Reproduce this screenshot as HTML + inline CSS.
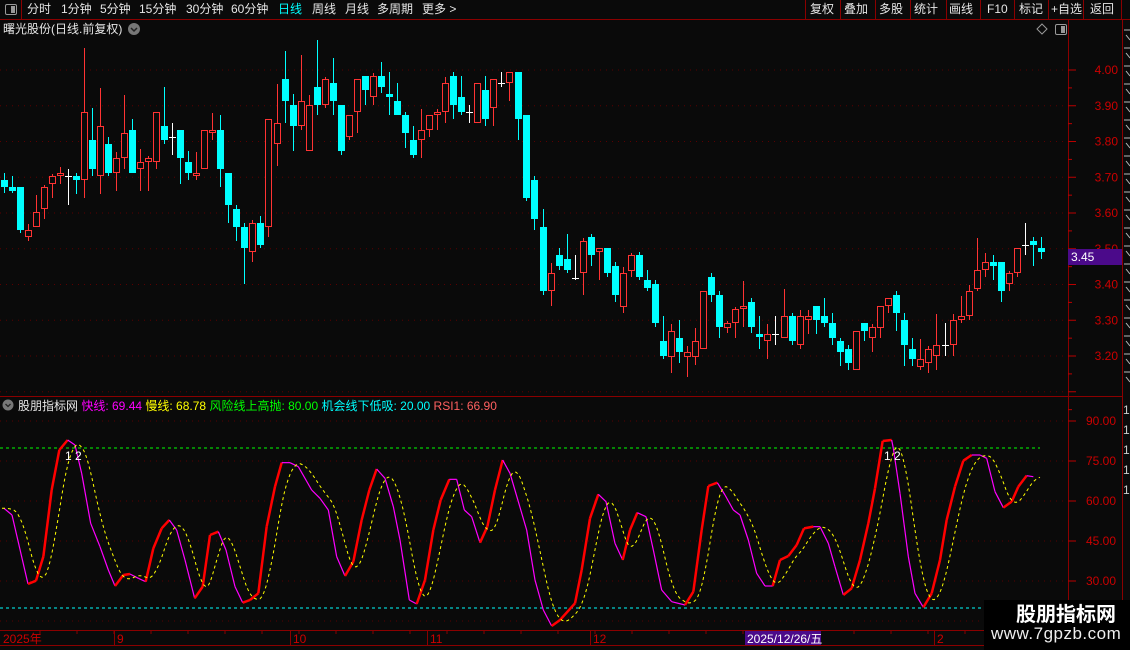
<!DOCTYPE html>
<html><head><meta charset="utf-8"><style>
*{margin:0;padding:0;box-sizing:border-box}
body{width:1130px;height:650px;background:#0a0a0a;overflow:hidden;position:relative;font-family:"Liberation Sans","Noto Sans CJK SC",sans-serif;color:#ddd}
.t{position:absolute;white-space:nowrap;font-size:12px;line-height:14px;color:#e6e6e6}
</style></head><body>
<svg id="s" width="1130" height="650" style="position:absolute;left:0;top:0"></svg>
<div class="t" style="left:27px;top:2px">分时</div>
<div class="t" style="left:61px;top:2px">1分钟</div>
<div class="t" style="left:100px;top:2px">5分钟</div>
<div class="t" style="left:139px;top:2px">15分钟</div>
<div class="t" style="left:186px;top:2px">30分钟</div>
<div class="t" style="left:231px;top:2px">60分钟</div>
<div class="t" style="left:278px;top:2px;color:#0ff">日线</div>
<div class="t" style="left:312px;top:2px">周线</div>
<div class="t" style="left:345px;top:2px">月线</div>
<div class="t" style="left:377px;top:2px">多周期</div>
<div class="t" style="left:422px;top:2px">更多 &gt;</div>
<div class="t" style="left:810px;top:2px">复权</div>
<div class="t" style="left:844px;top:2px">叠加</div>
<div class="t" style="left:879px;top:2px">多股</div>
<div class="t" style="left:914px;top:2px">统计</div>
<div class="t" style="left:949px;top:2px">画线</div>
<div class="t" style="left:987px;top:2px">F10</div>
<div class="t" style="left:1019px;top:2px">标记</div>
<div class="t" style="left:1051px;top:2px">+自选</div>
<div class="t" style="left:1090px;top:2px">返回</div>
<div class="t" style="left:3px;top:22px">曙光股份(日线.前复权)</div>
<div class="t" style="left:18px;top:399px">股朋指标网 <span style="color:#f0f">快线: 69.44</span> <span style="color:#ff0">慢线: 68.78</span> <span style="color:#0f0">风险线上高抛: 80.00</span> <span style="color:#0ff">机会线下低吸: 20.00</span> <span style="color:#ff6060">RSI1: 66.90</span></div>
<div style="position:absolute;left:984px;top:600px;width:146px;height:50px;background:#000"></div>
<div class="t" style="left:1016px;top:603px;font-size:20px;line-height:24px;font-weight:bold;color:#fff">股朋指标网</div>
<div class="t" style="left:991px;top:624px;font-size:17px;line-height:20px;color:#eee;letter-spacing:0.5px">www.7gpzb.com</div>
<script>
const S=document.getElementById('s');let h='';
const R='#8b0000';
h+=`<line x1="0" y1="19.5" x2="1130" y2="19.5" stroke="${R}"/><line x1="21.5" y1="0" x2="21.5" y2="19" stroke="${R}"/>`;
h+=`<rect x="5.5" y="4.5" width="11" height="10" rx="1.5" fill="none" stroke="#999"/><rect x="11" y="6" width="4" height="7" fill="#999"/>`;
[805,840,875,910,946,980,1014,1048,1083,1121].forEach(x=>h+=`<line x1="${x+.5}" y1="0" x2="${x+.5}" y2="19" stroke="${R}"/>`);
h+=`<circle cx="134" cy="29" r="6" fill="#777"/><path d="M131 28l3 3 3-3" stroke="#222" fill="none" stroke-width="1.5"/>`;
h+=`<path d="M1042 24l5 5-5 5-5-5z" stroke="#999" fill="none"/><rect x="1055.5" y="24.5" width="11" height="10" rx="1.5" fill="none" stroke="#999"/><rect x="1061" y="26" width="4" height="7" fill="#999"/>`;
h+=`<line x1="1068.5" y1="19" x2="1068.5" y2="645" stroke="${R}"/><line x1="1122.5" y1="19" x2="1122.5" y2="650" stroke="${R}"/>`;
h+=`<line x1="0" y1="396.5" x2="1122" y2="396.5" stroke="${R}"/><line x1="0" y1="630.5" x2="1122" y2="630.5" stroke="${R}"/><line x1="0" y1="645.5" x2="1122" y2="645.5" stroke="${R}"/>`;
for(let i=-1;i<=9;i++){const y=70+i*35.75;if(y<40||y>395)continue;h+=`<line x1="0" y1="${y}" x2="1068" y2="${y}" stroke="#5a0000" stroke-dasharray="1 5"/>`;
const p=(4-i*0.1).toFixed(2);h+=`<line x1="1068" y1="${y}" x2="1076" y2="${y}" stroke="#b00"/>`;if(y<370)h+=`<text x="1118" y="${y+4}" fill="#c00" font-size="12" text-anchor="end" font-family="Liberation Sans">${p}</text>`;
h+=`<line x1="1068" y1="${y+17.9}" x2="1072" y2="${y+17.9}" stroke="#b00"/>`;}
h+=`<rect x="1068" y="249" width="54" height="16" fill="#4b0a8a"/><text x="1071" y="261" fill="#fff" font-size="12" font-family="Liberation Sans">3.45</text>`;
const C=[[4,'c',180,187,173,193],[12,'c',187,191,176,193],[20,'c',187,230,187,233],[28,'r',230,237,224,241],[36,'r',212,227,195,227],[44,'r',187,209,185,219],[52,'r',176,184,174,198],[60,'r',173,176,167,184],[68,'w',176,176,169,205],[76,'c',176,180,173,194],[84,'r',112,180,48,198],[92,'c',140,169,108,176],[100,'r',126,176,88,194],[108,'c',144,173,137,176],[116,'r',158,173,152,191],[124,'r',133,158,95,169],[132,'c',130,173,119,173],[140,'r',162,169,149,191],[148,'r',158,162,156,191],[156,'r',112,162,112,169],[164,'c',126,140,87,144],[172,'w',137,137,123,155],[180,'c',130,158,130,184],[188,'c',162,173,151,180],[196,'r',173,176,152,180],[204,'r',130,169,130,169],[212,'r',130,133,113,140],[220,'c',130,169,115,187],[228,'c',173,205,173,223],[236,'c',209,227,205,241],[244,'c',227,248,223,284],[252,'r',223,252,220,262],[260,'c',223,245,216,248],[268,'r',119,227,119,237],[277,'r',123,144,84,166],[285,'c',79,101,51,123],[293,'c',105,126,94,151],[301,'r',101,126,55,130],[309,'r',105,151,95,151],[317,'c',87,105,40,115],[325,'r',79,105,77,108],[333,'c',83,101,58,115],[341,'c',105,151,105,155],[349,'r',115,137,115,140],[357,'r',79,112,79,133],[365,'c',76,90,76,105],[373,'r',76,97,73,105],[381,'c',76,87,62,93],[389,'c',94,97,72,115],[397,'c',101,115,83,115],[405,'c',115,133,112,148],[413,'c',140,155,126,158],[421,'r',130,140,109,158],[429,'r',115,130,115,137],[437,'r',112,115,109,130],[445,'r',83,112,77,123],[453,'c',76,105,72,119],[461,'c',97,112,76,115],[469,'w',112,112,105,123],[477,'r',83,123,83,123],[485,'c',90,119,76,126],[493,'r',79,108,79,126],[501,'w',83,83,72,87],[509,'r',72,83,72,101],[518,'c',72,119,72,140],[526,'c',115,198,115,201],[534,'c',180,219,176,230],[543,'c',227,291,209,295],[551,'r',273,291,263,306],[559,'c',255,266,248,270],[567,'c',259,270,234,273],[575,'w',278,278,255,280],[583,'r',241,273,238,295],[591,'c',237,255,234,266],[599,'r',248,252,248,280],[607,'c',248,273,248,277],[615,'c',266,295,262,302],[623,'r',273,307,267,313],[631,'r',255,271,253,277],[639,'c',255,277,252,280],[647,'c',280,288,270,291],[655,'c',284,323,280,327],[663,'c',341,356,316,359],[671,'r',331,357,324,373],[679,'c',338,352,320,363],[687,'r',352,357,346,377],[695,'r',341,357,328,365],[703,'r',291,349,291,349],[711,'c',277,295,273,302],[719,'c',295,327,291,338],[727,'r',323,328,321,333],[735,'r',309,323,307,338],[743,'r',306,309,281,327],[751,'c',302,327,298,333],[759,'c',334,337,316,349],[767,'r',334,341,324,359],[775,'w',334,334,316,345],[784,'r',316,338,289,338],[792,'c',316,341,313,345],[800,'r',316,345,310,349],[808,'r',316,320,310,334],[816,'c',306,320,306,334],[824,'c',316,323,298,327],[832,'c',323,338,313,345],[840,'c',341,352,338,366],[848,'c',349,363,345,370],[856,'r',331,370,331,370],[864,'c',323,331,323,341],[872,'r',327,338,324,352],[880,'r',306,328,306,338],[888,'r',298,306,298,313],[896,'c',295,313,291,331],[904,'c',320,345,313,366],[912,'c',349,359,338,366],[920,'r',359,367,339,370],[928,'r',349,363,346,373],[936,'r',345,356,314,370],[945,'w',345,345,323,356],[953,'r',320,345,314,356],[961,'r',316,320,296,323],[969,'r',291,316,285,320],[977,'r',270,289,238,291],[985,'r',262,270,253,277],[993,'c',262,266,255,280],[1001,'c',262,291,262,302],[1009,'r',273,284,271,291],[1017,'r',248,273,248,277],[1025,'w',245,245,223,255],[1033,'c',241,245,237,266],[1041,'c',248,252,237,259]];
C.forEach(([x,t,a,b,hi,lo])=>{
 if(t=='w'){h+=`<line x1="${x+.5}" y1="${hi}" x2="${x+.5}" y2="${lo}" stroke="#fff"/><line x1="${x-3}" y1="${a+.5}" x2="${x+4}" y2="${a+.5}" stroke="#fff"/>`;return;}
 const col=t=='c'?'#00ffff':'#ff3333';
 h+=`<line x1="${x+.5}" y1="${hi}" x2="${x+.5}" y2="${lo}" stroke="${col}"/>`;
 if(t=='c')h+=`<rect x="${x-3}" y="${a}" width="7" height="${Math.max(b-a,2)}" fill="${col}"/>`;
 else h+=`<rect x="${x-2.5}" y="${a+.5}" width="6" height="${Math.max(b-a-1,2)}" fill="#0a0a0a" stroke="${col}"/>`;
});
[[421,'90.00'],[461,'75.00'],[501,'60.00'],[541,'45.00'],[581,'30.00'],[621,'']].forEach(([y,l])=>{h+=`<line x1="0" y1="${y}" x2="1068" y2="${y}" stroke="#5a0000" stroke-dasharray="1 5"/>`;if(l)h+=`<line x1="1068" y1="${y}" x2="1076" y2="${y}" stroke="#b00"/><text x="1116" y="${y+4}" fill="#c00" font-size="12" text-anchor="end" font-family="Liberation Sans">${l}</text>`;});
h+=`<line x1="0" y1="448" x2="1040" y2="448" stroke="#0f0" stroke-dasharray="3 3"/><line x1="0" y1="608" x2="1068" y2="608" stroke="#0ff" stroke-dasharray="3 3"/>`;
const A=[[12,235],[36,255],[84,462],[108,452],[130,380],[155,180],[178,60],[203,30],[225,45],[245,130],[272,280],[300,350],[325,420],[345,468],[370,435],[390,432],[415,445],[437,455],[460,355],[485,295],[508,270],[530,300],[555,390],[584,505],[608,470],[630,315],[655,305],[678,360],[705,470],[728,518],[750,510],[775,490],[800,290],[825,170],[845,98],[870,98],[895,110],[935,180],[960,205],[985,240],[1010,380],[1035,438],[1060,395],[1085,270],[1108,180],[1130,117],[1155,145],[1180,230],[1200,330],[1228,510],[1250,522],[1275,450],[1300,300],[1322,210],[1348,148],[1370,148],[1393,240],[1415,260],[1440,338],[1462,290],[1485,180],[1508,90],[1530,130]].map(([a,b])=>[a/3,430+b/3]);
const B=[[20,300],[45,450],[70,540],[95,588],[120,570],[165,520],[185,420],[210,265],[235,193],[258,215],[285,340],[308,390],[330,300],[352,248],[378,260],[400,360],[425,480],[455,515],[495,525],[520,485],[545,300],[565,168],[592,158],[615,195],[640,240],[660,255],[685,330],[710,430],[735,468],[758,468],[780,390],[805,378],[830,345],[852,295],[880,290],[900,290],[925,340],[945,410],[970,495],[995,475],[1020,390],[1045,280],[1065,175],[1088,33],[1115,30],[1120,55],[1140,190],[1165,380],[1185,490],[1210,532],[1235,490],[1260,390],[1280,270],[1305,170],[1330,92],[1355,75],[1380,75],[1400,85],[1425,185],[1450,233],[1475,215],[1495,170],[1520,137],[1540,140]].map(([a,b])=>[520+a/3,430+b/3]);
const P=A.concat(B);
for(let i=1;i<P.length;i++){const [x0,y0]=P[i-1],[x1,y1]=P[i];const up=y1<y0-0.3;h+=`<line x1="${x0}" y1="${y0}" x2="${x1}" y2="${y1}" stroke="${up?'#ff0000':'#ff00ff'}" stroke-width="${up?2.5:1.2}"/>`;}
function f(x){if(x<=P[0][0])return P[0][1];for(let i=1;i<P.length;i++)if(x<=P[i][0]){const [a,b]=P[i-1],[c,d]=P[i];return b+(d-b)*(x-a)/(c-a);}return P[P.length-1][1];}
let sp=[];for(let x=2;x<=1040;x+=2){let s=0,n=0;for(let k=2;k<=18;k+=2){s+=f(x-k);n++;}sp.push(x+','+(s/n).toFixed(1));}
h+=`<polyline points="${sp.join(' ')}" fill="none" stroke="#ffff00" stroke-width="1" stroke-dasharray="3 3"/>`;
h+=`<text x="65" y="460" fill="#fff" font-size="12" font-family="Liberation Sans">1 2</text><text x="884" y="460" fill="#fff" font-size="12" font-family="Liberation Sans">1 2</text>`;
h+=`<circle cx="8" cy="405" r="5.5" fill="#777"/><path d="M5.5 404l2.5 2.5 2.5-2.5" stroke="#222" fill="none" stroke-width="1.3"/>`;
[[117,'9'],[293,'10'],[430,'11'],[593,'12'],[937,'2']].forEach(([x,l])=>{h+=`<line x1="${x-2.5}" y1="631" x2="${x-2.5}" y2="645" stroke="${R}"/><text x="${x}" y="643" fill="#c00" font-size="12" font-family="Liberation Sans">${l}</text>`;});
h+=`<text x="3" y="643" fill="#c00" font-size="12" font-family="Liberation Sans,Noto Sans CJK SC">2025年</text>`;
for(let x=40;x<1060;x+=37)h+=`<line x1="${x}" y1="631" x2="${x}" y2="634" stroke="${R}"/>`;
h+=`<rect x="745" y="631" width="76" height="14" fill="#4b0a8a"/><text x="747" y="643" fill="#fff" font-size="12" font-family="Liberation Sans,Noto Sans CJK SC">2025/12/26/五</text>`;
for(let y=30;y<390;y+=18)h+=`<line x1="1124" y1="${y}" x2="1130" y2="${y}" stroke="#bbb"/><line x1="1126" y1="${y+5}" x2="1130" y2="${y+10}" stroke="#bbb"/>`;
[410,430,450,470,490].forEach(y=>h+=`<text x="1123" y="${y+4}" fill="#ccc" font-size="12">1</text>`);
S.innerHTML=h;
</script>
</body></html>
